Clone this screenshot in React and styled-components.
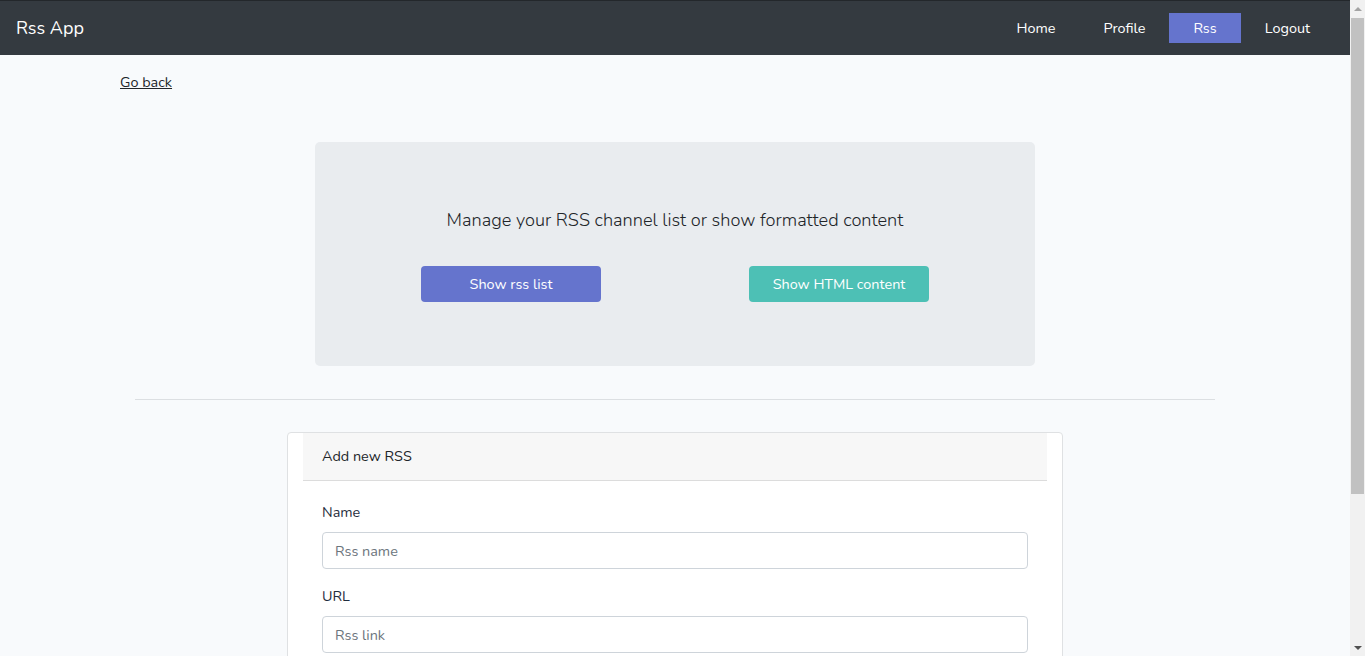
import React from "react";
import styled, { createGlobalStyle } from "styled-components";

const Global = createGlobalStyle`
  html, body { margin: 0; padding: 0; }
  body {
    background: #f8fafc;
    color: #212529;
    font-family: "Nunito", "Lato", "Open Sans", sans-serif;
    font-size: 14.4px;
    line-height: 1.6;
    overflow: hidden;
  }
  * { box-sizing: border-box; }
`;

const Shell = styled.div`
  display: flex;
  height: 100vh;
  overflow: hidden;
`;

const Page = styled.div`
  flex: 1;
  min-width: 0;
  overflow: hidden;
`;

const ScrollTrack = styled.div`
  width: 15px;
  flex: none;
  background: #f1f1f1;
  display: flex;
  flex-direction: column;
  align-items: center;
`;

const Arrow = styled.div`
  width: 15px;
  height: 17px;
  display: flex;
  align-items: center;
  justify-content: center;
  &::before {
    content: "";
    border-left: 4px solid transparent;
    border-right: 4px solid transparent;
    ${(p) =>
      p.$down
        ? "border-top: 4px solid #505050;"
        : "border-bottom: 4px solid #a3a3a3;"}
  }
`;

const Thumb = styled.div`
  width: 13px;
  height: 476px;
  margin-top: 1px;
  background: #c1c1c1;
`;

const Spacer = styled.div`
  flex: 1;
`;

const Navbar = styled.nav`
  height: 55px;
  background: #343a40;
  border-top: 1px solid #23272b;
  display: flex;
  align-items: center;
  justify-content: space-between;
  padding: 0 16px;
`;

const Brand = styled.a`
  color: #fff;
  font-size: 18px;
  text-decoration: none;
  line-height: 1;
`;

const NavList = styled.div`
  display: flex;
  align-items: center;
`;

const NavItem = styled.a`
  color: #fff;
  font-size: 14.4px;
  text-decoration: none;
  height: 30px;
  line-height: 30px;
  padding: 0 24px;
  background: ${(p) => (p.$active ? "#6574cd" : "transparent")};
`;

const Container = styled.main`
  width: 1110px;
  margin: 0 auto;
  padding-bottom: 60px;
`;

const BackLink = styled.a`
  display: inline-block;
  margin-top: 16px;
  color: #212529;
  text-decoration: underline;
  font-size: 14.4px;
`;

const Jumbotron = styled.section`
  width: 720px;
  height: 224px;
  margin: 48px auto 0;
  background: #e9ecef;
  border-radius: 5px;
  display: flex;
  flex-direction: column;
  align-items: center;
  padding-top: 65px;
`;

const Lead = styled.p`
  margin: 0;
  font-size: 18.2px;
  font-weight: 300;
  line-height: 26px;
  color: #212529;
`;

const ButtonRow = styled.div`
  display: flex;
  gap: 148px;
  margin-top: 33px;
`;

const Button = styled.button`
  width: 180px;
  height: 36px;
  border: none;
  border-radius: 4px;
  color: #fff;
  font-family: inherit;
  font-size: 14.4px;
  background: ${(p) => p.$bg};
  cursor: pointer;
`;

const Divider = styled.hr`
  width: 1080px;
  margin: 33px auto 32px;
  border: 0;
  border-top: 1px solid #dcdfe2;
`;

const Card = styled.section`
  width: 776px;
  margin: 0 auto;
  background: #fff;
  border: 1px solid #dfe1e3;
  border-radius: 4px;
  padding: 0 15px 20px;
`;

const CardHeader = styled.div`
  height: 48px;
  background: #f7f7f7;
  border-bottom: 1px solid #dcdcdc;
  padding: 0 19px;
  display: flex;
  align-items: center;
  font-size: 14.4px;
  color: #212529;
`;

const CardBody = styled.div`
  padding: 20px 19px 0;
`;

const FormGroup = styled.div`
  margin-bottom: 16px;
`;

const Label = styled.label`
  display: block;
  font-size: 14.4px;
  color: #1f2d3d;
  line-height: 23px;
  margin-bottom: 8px;
`;

const Input = styled.input`
  display: block;
  width: 100%;
  height: 37px;
  padding: 6px 12px;
  font-family: inherit;
  font-size: 14.4px;
  color: #495057;
  background: #fff;
  border: 1px solid #ced4da;
  border-radius: 4px;
  &::placeholder { color: #6c757d; }
`;

export default function App() {
  return (
    <>
      <Global />
      <Shell>
        <Page>
          <Navbar>
            <Brand href="#">Rss App</Brand>
            <NavList>
              <NavItem href="#">Home</NavItem>
              <NavItem href="#">Profile</NavItem>
              <NavItem href="#" $active>Rss</NavItem>
              <NavItem href="#">Logout</NavItem>
            </NavList>
          </Navbar>
          <Container>
            <BackLink href="#">Go back</BackLink>
            <Jumbotron>
              <Lead>Manage your RSS channel list or show formatted content</Lead>
              <ButtonRow>
                <Button $bg="#6574cd">Show rss list</Button>
                <Button $bg="#4dc0b5">Show HTML content</Button>
              </ButtonRow>
            </Jumbotron>
            <Divider />
            <Card>
              <CardHeader>Add new RSS</CardHeader>
              <CardBody>
                <FormGroup>
                  <Label>Name</Label>
                  <Input placeholder="Rss name" />
                </FormGroup>
                <FormGroup>
                  <Label>URL</Label>
                  <Input placeholder="Rss link" />
                </FormGroup>
                <Button $bg="#6574cd">Add</Button>
              </CardBody>
            </Card>
          </Container>
        </Page>
        <ScrollTrack>
          <Arrow />
          <Thumb />
          <Spacer />
          <Arrow $down />
        </ScrollTrack>
      </Shell>
    </>
  );
}
